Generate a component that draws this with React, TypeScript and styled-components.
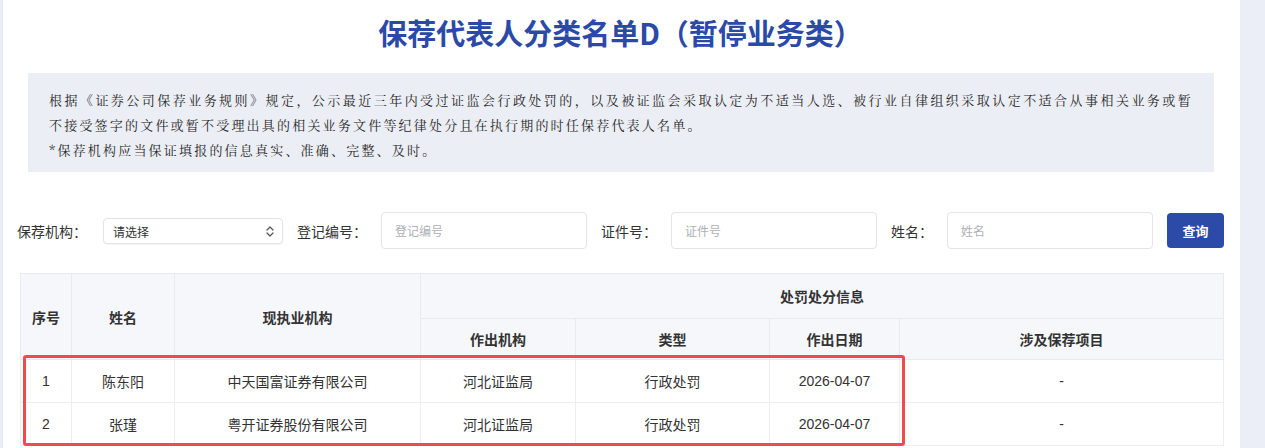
import React from 'react';
import styled, { createGlobalStyle } from 'styled-components';

const GlobalStyle = createGlobalStyle`
	html, body {
		margin: 0;
		padding: 0;
		background: #eceef7;
	}
	body {
		font-family: "Noto Sans CJK SC", "Liberation Sans", sans-serif;
		color: #333;
	}
`;

const Shell = styled.div`
	display: flex;
	min-height: 448px;
`;

const Card = styled.main`
	flex: 0 0 1238px;
	box-sizing: border-box;
	margin-left: 2px;
	padding: 12px 16px 0 14px;
	background: #fff;
	border-left: 1px solid #e5e8f1;
`;

const Aside = styled.div`
	flex: 1;
	background: #eceef7;
`;

const Title = styled.h1`
	margin: 0;
	text-align: center;
	font-size: 29px;
	line-height: 40px;
	font-weight: 700;
	color: #2b4aa8;
`;

const Notice = styled.section`
	margin: 21px 10px 0 11px;
	padding: 14px 21px 10px;
	background: #eceef5;
	font-family: "Noto Serif CJK SC", "Liberation Serif", "Noto Sans CJK SC", serif;
	font-size: 13px;
	letter-spacing: 2.2px;
	line-height: 25px;
	color: #1f1f1f;
`;

const NoticeLine = styled.p<{ $justify?: boolean }>`
	margin: 0;
	white-space: nowrap;
	text-align: ${p => (p.$justify ? 'justify' : 'left')};
	text-align-last: ${p => (p.$justify ? 'justify' : 'auto')};
`;

const Filters = styled.form`
	display: flex;
	align-items: center;
	gap: 14px;
	margin-top: 40px;
	height: 37px;
`;

const Label = styled.label`
	font-size: 14px;
	color: #333;
	white-space: nowrap;
`;

const SelectWrap = styled.div`
	position: relative;
	margin-left: 2px;
	width: 180px;
	height: 26px;
`;

const Select = styled.select`
	appearance: none;
	box-sizing: border-box;
	width: 100%;
	height: 100%;
	padding: 0 24px 0 9px;
	border: 1px solid #e1e3e8;
	border-radius: 4px;
	background: #fff;
	box-shadow: 0 1px 1px rgba(0, 0, 0, 0.04);
	font-family: inherit;
	font-size: 12px;
	color: #333;
	outline: none;
`;

const Caret = styled.svg`
	position: absolute;
	right: 9px;
	top: 8px;
	pointer-events: none;
`;

const Input = styled.input`
	box-sizing: border-box;
	width: 206px;
	height: 37px;
	padding: 0 13px;
	border: 1px solid #e3e5ea;
	border-radius: 4px;
	font-family: inherit;
	font-size: 12px;
	color: #333;
	outline: none;

	&::placeholder {
		color: #aeb0b5;
	}
`;

const Button = styled.button`
	width: 57px;
	height: 35px;
	border: none;
	border-radius: 4px;
	background: #2c4aa7;
	color: #fff;
	font-family: inherit;
	font-size: 13px;
	font-weight: 700;
	cursor: pointer;
`;

const TableWrap = styled.div`
	position: relative;
	width: 1203px;
	margin: 24px 0 0 3px;
`;

const Table = styled.table`
	width: 100%;
	border-collapse: collapse;
	table-layout: fixed;
	font-size: 14px;
	color: #333;
`;

const Th = styled.th`
	border: 1px solid #e8eaf1;
	background: #f6f7fb;
	font-weight: 700;
	text-align: center;
	padding: 0;
`;

const Td = styled.td`
	border: 1px solid #eceef3;
	text-align: center;
	padding: 0;
	font-family: "Liberation Sans", "Noto Sans CJK SC", sans-serif;
`;

const Row = styled.tr<{ $h: number }>`
	height: ${p => p.$h}px;
`;

const Highlight = styled.div`
	position: absolute;
	left: 3px;
	top: 82px;
	width: 882px;
	height: 91px;
	box-sizing: border-box;
	border: 3px solid #ee4c4c;
	border-radius: 3px;
	pointer-events: none;
`;

const columns = [51, 103, 246, 155, 194, 130, 324];

const rows = [
	{ no: 1, name: '陈东阳', org: '中天国富证券有限公司', by: '河北证监局', type: '行政处罚', date: '2026-04-07', project: '-' },
	{ no: 2, name: '张瑾', org: '粤开证券股份有限公司', by: '河北证监局', type: '行政处罚', date: '2026-04-07', project: '-' }
];

const App: React.FC = () => {
	return (
		<>
			<GlobalStyle />
			<Shell>
				<Card>
					<Title>保荐代表人分类名单D（暂停业务类）</Title>
					<Notice>
						<NoticeLine $justify>
							根据《证券公司保荐业务规则》规定，公示最近三年内受过证监会行政处罚的，以及被证监会采取认定为不适当人选、被行业自律组织采取认定不适合从事相关业务或暂
						</NoticeLine>
						<NoticeLine>不接受签字的文件或暂不受理出具的相关业务文件等纪律处分且在执行期的时任保荐代表人名单。</NoticeLine>
						<NoticeLine>*保荐机构应当保证填报的信息真实、准确、完整、及时。</NoticeLine>
					</Notice>

					<Filters onSubmit={e => e.preventDefault()}>
						<Label htmlFor="org">保荐机构：</Label>
						<SelectWrap>
							<Select id="org" defaultValue="">
								<option value="">请选择</option>
							</Select>
							<Caret width="8" height="11" viewBox="0 0 8 11">
								<path d="M1 4 L4 1 L7 4 M1 7 L4 10 L7 7" fill="none" stroke="#555" strokeWidth="1.3" strokeLinecap="round" strokeLinejoin="round" />
							</Caret>
						</SelectWrap>
						<Label htmlFor="regNo">登记编号：</Label>
						<Input id="regNo" placeholder="登记编号" />
						<Label htmlFor="idNo">证件号：</Label>
						<Input id="idNo" placeholder="证件号" />
						<Label htmlFor="name">姓名：</Label>
						<Input id="name" placeholder="姓名" />
						<Button type="submit">查询</Button>
					</Filters>

					<TableWrap>
						<Table>
							<colgroup>
								{columns.map((w, i) => (
									<col key={i} style={{ width: w }} />
								))}
							</colgroup>
							<thead>
								<Row $h={45}>
									<Th rowSpan={2}>序号</Th>
									<Th rowSpan={2}>姓名</Th>
									<Th rowSpan={2}>现执业机构</Th>
									<Th colSpan={4}>处罚处分信息</Th>
								</Row>
								<Row $h={41}>
									<Th>作出机构</Th>
									<Th>类型</Th>
									<Th>作出日期</Th>
									<Th>涉及保荐项目</Th>
								</Row>
							</thead>
							<tbody>
								{rows.map(r => (
									<Row $h={43} key={r.no}>
										<Td>{r.no}</Td>
										<Td>{r.name}</Td>
										<Td>{r.org}</Td>
										<Td>{r.by}</Td>
										<Td>{r.type}</Td>
										<Td>{r.date}</Td>
										<Td>{r.project}</Td>
									</Row>
								))}
							</tbody>
						</Table>
						<Highlight />
					</TableWrap>
				</Card>
				<Aside />
			</Shell>
		</>
	);
};

export default App;
